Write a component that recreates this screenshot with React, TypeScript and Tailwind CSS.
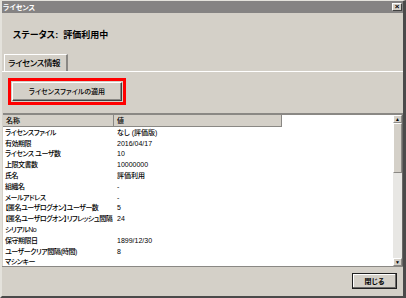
import React from 'react';

const rows: [string, string][] = [
  ['ライセンスファイル', 'なし (評価版)'],
  ['有効期限', '2016/04/17'],
  ['ライセンス ユーザ数', '10'],
  ['上限文書数', '10000000'],
  ['氏名', '評価利用'],
  ['組織名', '-'],
  ['メールアドレス', '-'],
  ['【匿名ユーザログオン】ユーザー数', '5'],
  ['【匿名ユーザログオン】リフレッシュ間隔', '24'],
  ['シリアルNo', ''],
  ['保守期限日', '1899/12/30'],
  ['ユーザークリア間隔(時間)', '8'],
  ['マシンキー', ''],
];

const font = "font-['Liberation_Sans','Noto_Sans_CJK_JP',sans-serif] [font-feature-settings:'palt']";

export default function App() {
  return (
    <div
      className={`flex h-[298px] w-[406px] flex-col border-t border-l-2 border-r-[3px] border-b-2 border-t-[#e4e2dc] border-l-[#e4e2dc] border-r-[#4a4a4a] border-b-[#4a4a4a] bg-[#d4d0c8] text-black ${font}`}
    >
      {/* Title bar */}
      <div className="flex h-[12px] items-center justify-between bg-[#858383] pl-[1px] pr-[1px]">
        <span className="text-[7px] font-bold leading-none text-white">ライセンス</span>
        <button className="flex h-[8px] w-[10px] items-center justify-center border border-t-white border-l-white border-r-[#404040] border-b-[#404040] bg-[#d4d0c8] text-[8px] font-bold leading-none text-black">
          ×
        </button>
      </div>

      {/* Status */}
      <div className="pl-[11px] pt-[18px] text-[9px] font-semibold leading-[9px]">
        ステータス:&nbsp;&nbsp;評価利用中
      </div>

      {/* Tab */}
      <div className="mt-[14px] flex pl-[2px]">
        <div className="flex h-[17px] w-[64px] items-center whitespace-nowrap border-t border-l border-r-2 border-t-white border-l-white border-r-[#8a8884] pl-[3px] text-[8.5px] font-medium leading-none tracking-[-0.4px]">
          ライセンス情報
        </div>
      </div>

      {/* Panel */}
      <div className="flex flex-1 flex-col border-t border-t-white">
        <div className="pl-[6px] pt-[6px]">
          <div className="h-[27px] w-[118px] border-[3px] border-[#ff0000] p-[1px]">
            <button className="flex h-full w-full items-center justify-center whitespace-nowrap border border-t-white border-l-white border-r-[#404040] border-b-[#404040] bg-[#d4d0c8] text-[7px] font-medium leading-none shadow-[inset_-1px_-1px_0_#8a8884]">
              ライセンスファイルの適用
            </button>
          </div>
        </div>

        {/* List */}
        <div className="mt-[8px] ml-[1px] flex h-[153px] border-t-2 border-t-[#8a8884] bg-white">
          <div className="flex-1 overflow-hidden">
            <div className="flex h-[12px] w-[279px] bg-[#d4d0c8] text-[7px] font-medium leading-none">
              <div className="flex w-[111px] items-center border-r border-b border-r-[#8a8884] border-b-[#8a8884] pl-[3px]">名称</div>
              <div className="flex flex-1 items-center border-r border-b border-r-[#8a8884] border-b-[#8a8884] pl-[3px]">値</div>
            </div>
            {rows.map(([k, v]) => (
              <div key={k} className="flex h-[10.8px] items-center text-[7px] font-medium leading-none">
                <div className="w-[114px] whitespace-nowrap pl-[2px] tracking-[-0.5px]">{k}</div>
                <div className="whitespace-nowrap">{v}</div>
              </div>
            ))}
          </div>
          {/* Scrollbar */}
          <div className="flex w-[9px] flex-col bg-[#e8e7e4]">
            <div className="flex h-[8px] items-center justify-center border border-t-white border-l-white border-r-[#8a8884] border-b-[#8a8884] bg-[#d4d0c8] text-[5px] leading-none">▲</div>
            <div className="h-[50px] border border-t-white border-l-white border-r-[#8a8884] border-b-[#8a8884] bg-[#d4d0c8]" />
            <div className="flex-1" />
            <div className="flex h-[8px] items-center justify-center border border-t-white border-l-white border-r-[#8a8884] border-b-[#8a8884] bg-[#d4d0c8] text-[5px] leading-none">▼</div>
          </div>
          <div className="w-[1px] bg-[#6a6866]" />
        </div>

        {/* Footer */}
        <div className="flex flex-1 items-start justify-end border-t border-t-[#8a8884] pr-[6px] pt-[6px]">
          <button className="flex h-[16px] w-[45px] items-center justify-center border border-[#202020] bg-[#d4d0c8] text-[7px] font-semibold leading-none shadow-[inset_-1px_-1px_0_#6a6866,inset_1px_1px_0_#ffffff]">
            閉じる
          </button>
        </div>
      </div>
    </div>
  );
}
